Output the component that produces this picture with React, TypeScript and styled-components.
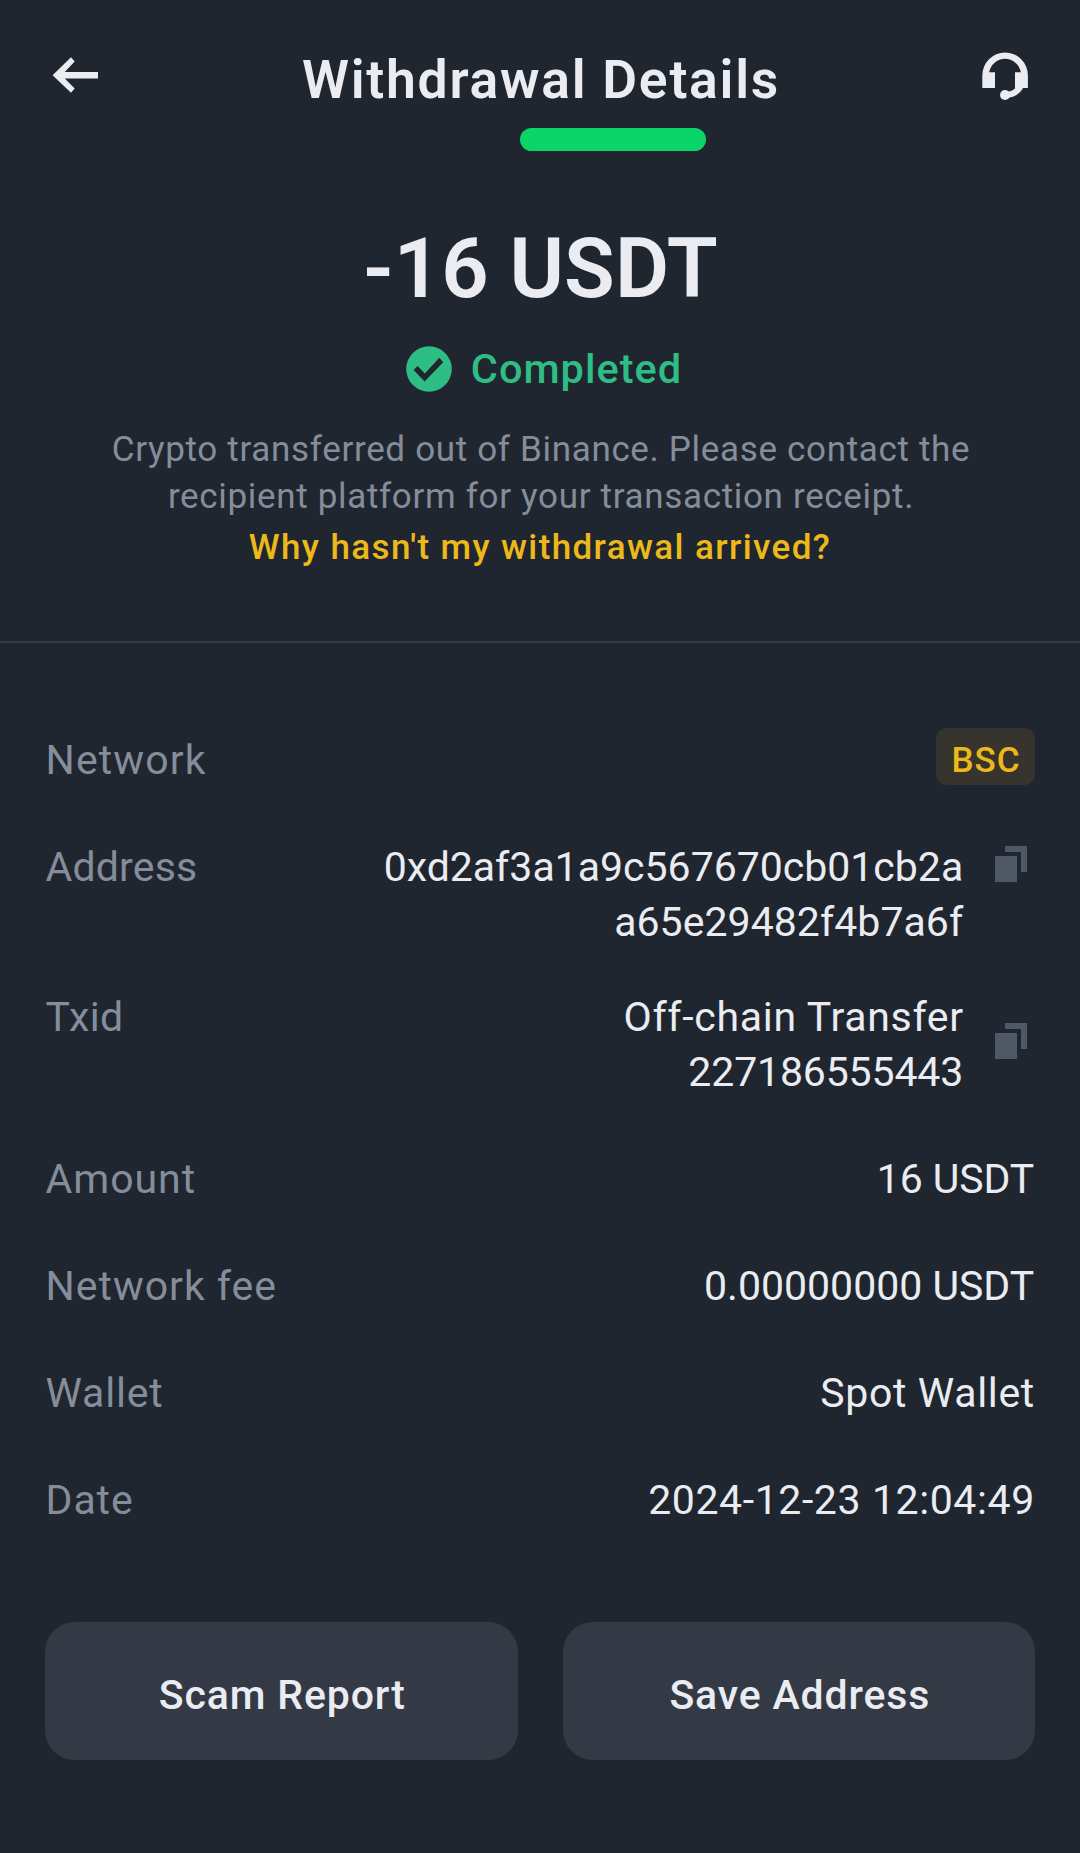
import React from "react";
import styled, { createGlobalStyle } from "styled-components";

const color = {
  page: "#20262f",
  panel: "#343a45",
  line: "#333a44",
  text: "#eaecf1",
  muted: "#858d9b",
  icon: "#4f5867",
  green: "#2ebd85",
  yellow: "#edb91a",
  pill: "#0bd468",
};

const GlobalStyle = createGlobalStyle`
  *, *::before, *::after { box-sizing: border-box; }
  body {
    margin: 0;
    background: ${color.page};
    color: ${color.text};
    font-family: Roboto, "Open Sans", sans-serif;
  }
  svg { display: block; flex: none; }
  button { font: inherit; color: inherit; border: 0; padding: 0; background: none; }
`;

const Screen = styled.main`
  width: 1080px;
  height: 1853px;
  padding-top: 45px;
  display: flex;
  flex-direction: column;
  overflow: hidden;
`;

const Header = styled.header`
  display: grid;
  grid-template-columns: 60px 1fr 60px;
  padding: 0 45px;
  height: 70px;
`;

const IconButton = styled.button`
  width: 60px;
  height: 60px;
`;

const Title = styled.h1`
  margin: 0;
  padding-left: 2px;
  text-align: center;
  font-size: 53.5px;
  font-weight: 600;
  line-height: 70px;
  letter-spacing: 1.73px;
`;

const Pill = styled.div`
  flex: none;
  width: 186px;
  height: 23px;
  margin: 13px 0 0 519.5px;
  border-radius: 12px;
  background: ${color.pill};
`;

const Summary = styled.section`
  display: flex;
  flex-direction: column;
  align-items: center;
  padding: 68px 0 71px;
  border-bottom: 2px solid ${color.line};
`;

const Total = styled.div`
  padding-left: 1px;
  font-size: 83px;
  font-weight: 600;
  line-height: 100px;
  letter-spacing: 0.13px;
`;

const Status = styled.div`
  display: flex;
  align-items: center;
  gap: 15px;
  height: 55px;
  margin-top: 22px;
  padding-left: 4px;
  color: ${color.green};
  font-size: 41.5px;
  font-weight: 500;
  line-height: 55px;
  letter-spacing: 1px;
`;

const Note = styled.p`
  margin: 30px 0 4px;
  padding-left: 2px;
  text-align: center;
  color: ${color.muted};
  font-size: 35px;
  line-height: 47px;
  letter-spacing: 0.67px;
`;

const HelpLink = styled.a`
  margin-bottom: -1px;
  color: ${color.yellow};
  font-size: 35px;
  font-weight: 500;
  line-height: 47px;
  letter-spacing: 1.38px;
`;

const Details = styled.dl`
  display: flex;
  flex-direction: column;
  margin: 0;
  padding: 90px 45px 0;
`;

const Row = styled.div<{ $after?: number }>`
  display: flex;
  align-items: flex-start;
  margin-bottom: ${(p) => p.$after ?? 52}px;
  font-size: 41px;
  line-height: 55px;
`;

const Label = styled.dt<{ $track: number }>`
  padding-left: 0.6px;
  color: ${color.muted};
  letter-spacing: ${(p) => p.$track}px;
`;

const Value = styled.dd`
  display: flex;
  flex-direction: column;
  align-items: flex-end;
  margin: 0 0 0 auto;
`;

const Line = styled.span<{ $track: number }>`
  letter-spacing: ${(p) => p.$track}px;
  margin-right: ${(p) => 0.8 - p.$track}px;
  white-space: nowrap;
`;

const CopyButton = styled.button<{ $top: number }>`
  margin: ${(p) => p.$top}px 8px 0 31px;
`;

const Badge = styled.span`
  width: 99px;
  height: 57px;
  margin: -5px 0 -2px;
  padding-left: 1px;
  border-radius: 11px;
  background: #36342c;
  color: ${color.yellow};
  text-align: center;
  font-size: 35px;
  font-weight: 500;
  line-height: 65px;
  letter-spacing: 1px;
`;

const Actions = styled.div`
  display: grid;
  grid-template-columns: 1fr 1fr;
  gap: 45px;
  padding: 42px 45px 0;
`;

const ActionButton = styled.button`
  height: 138px;
  padding: 8px 0 0 2px;
  border-radius: 30px;
  background: ${color.panel};
  font-size: 41px;
  font-weight: 500;
  letter-spacing: 0.85px;
`;

const BackIcon = () => (
  <svg width="60" height="60" viewBox="0 0 60 60" fill={color.text}>
    <path d="M7.6 30.2 26 12.3 29.7 16.4 19.8 27H53V33.4H19.8L29.7 43.6 26 47.7Z" />
  </svg>
);

const SupportIcon = () => (
  <svg width="60" height="60" viewBox="0 0 60 60">
    <path
      fill={color.text}
      d="M7.3 43V30.4A22.8 22.8 0 0 1 52.9 30.4V43H40V27.3H45.8A16 16 0 0 0 14.2 27.3H20V43Z"
    />
    <path d="M46 40Q43 48.5 31 50" fill="none" stroke={color.text} strokeWidth="6" />
    <circle cx="30" cy="50" r="5" fill={color.text} />
  </svg>
);

const CheckIcon = () => (
  <svg width="54" height="54" viewBox="0 0 54 54">
    <circle cx="27" cy="27" r="22.8" fill={color.green} />
    <path d="M11.6 28.1 15.6 24 22.8 31.4 37.3 15.8 41.2 20.2 22.6 39.6Z" fill={color.page} />
  </svg>
);

const CopyIcon = () => (
  <svg width="32" height="36" viewBox="0 0 32 36" fill={color.icon}>
    <path d="M0 10H22V36H0Z" />
    <path d="M10 0H32V26H26V6H10Z" />
  </svg>
);

type Text = [content: string, track: number];

type Detail = {
  label: Text;
  lines?: Text[];
  badge?: string;
  copyTop?: number;
  after?: number;
};

const details: Detail[] = [
  { label: ["Network", 1.1], badge: "BSC" },
  {
    label: ["Address", 0.17],
    lines: [
      ["0xd2af3a1a9c567670cb01cb2a", 0],
      ["a65e29482f4b7a6f", 0.05],
    ],
    copyTop: 6,
    after: 40,
  },
  {
    label: ["Txid", 0.4],
    lines: [
      ["Off-chain Transfer", 0.69],
      ["227186555443", -0.15],
    ],
    copyTop: 33,
  },
  { label: ["Amount", 0.95], lines: [["16 USDT", -0.1]] },
  { label: ["Network fee", 0.97], lines: [["0.00000000 USDT", 0]] },
  { label: ["Wallet", 0.8], lines: [["Spot Wallet", 0.65]] },
  { label: ["Date", 0.9], lines: [["2024-12-23 12:04:49", 0.6]] },
];

const DetailRow = ({ label, lines, badge, copyTop, after }: Detail) => (
  <Row $after={after}>
    <Label $track={label[1]}>{label[0]}</Label>
    <Value>
      {badge && <Badge>{badge}</Badge>}
      {lines?.map(([content, track]) => (
        <Line key={content} $track={track}>
          {content}
        </Line>
      ))}
    </Value>
    {copyTop !== undefined && (
      <CopyButton $top={copyTop} aria-label="Copy">
        <CopyIcon />
      </CopyButton>
    )}
  </Row>
);

export default function App() {
  return (
    <>
      <GlobalStyle />
      <Screen>
        <Header>
          <IconButton aria-label="Back">
            <BackIcon />
          </IconButton>
          <Title>Withdrawal Details</Title>
          <IconButton aria-label="Support">
            <SupportIcon />
          </IconButton>
        </Header>
        <Pill />
        <Summary>
          <Total>-16 USDT</Total>
          <Status>
            <CheckIcon />
            Completed
          </Status>
          <Note>
            Crypto transferred out of Binance. Please contact the
            <br />
            recipient platform for your transaction receipt.
          </Note>
          <HelpLink>Why hasn't my withdrawal arrived?</HelpLink>
        </Summary>
        <Details>
          {details.map((d) => (
            <DetailRow key={d.label[0]} {...d} />
          ))}
        </Details>
        <Actions>
          <ActionButton>Scam Report</ActionButton>
          <ActionButton>Save Address</ActionButton>
        </Actions>
      </Screen>
    </>
  );
}
